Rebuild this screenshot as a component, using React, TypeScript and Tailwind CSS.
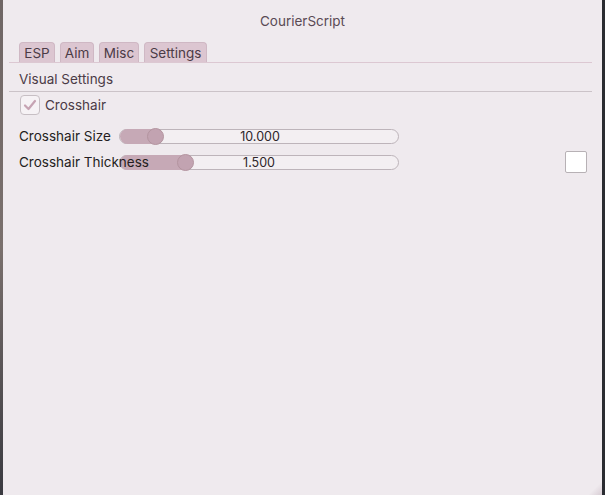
import React from "react";

function Slider({ value, pct, center }: { value: string; pct: number; center: number }) {
  return (
    <div className="relative h-[15px] w-[280px] rounded-full border border-[#bdb4ba] bg-[#f3eff2]">
      <div
        className="absolute left-0 top-[-1px] h-[15px] rounded-l-full bg-[#c6a9b6]"
        style={{ width: `${pct}px` }}
      />
      <div
        className="absolute top-[-2px] h-[17px] w-[17px] rounded-full border border-[#b3949f] bg-[#c2a3b1]"
        style={{ left: `${pct - 9}px` }}
      />
      <div
        className="absolute top-[-1px] h-[15px] text-[12.5px] leading-[15px] text-[#2d2529]"
        style={{ left: `${center}px`, transform: "translateX(-50%)" }}
      >
        {value}
      </div>
    </div>
  );
}

export default function App() {
  const tabs = [
    { t: "ESP", w: 36 },
    { t: "Aim", w: 34 },
    { t: "Misc", w: 40 },
    { t: "Settings", w: 63 },
  ];
  return (
    <div
      className="flex h-[495px] w-[605px] bg-[#2a2c31]"
      style={{ fontFamily: "Inter, 'Noto Sans', sans-serif" }}
    >
      <div className="h-full w-[3px] bg-gradient-to-b from-[#6f6665] via-[#7a706d] to-[#3a3a40]" />
      <div className="relative flex h-full w-[599px] flex-col bg-[#efeaee]">
        <div className="pt-[12px] text-center text-[13.5px] leading-[18px] text-[#5a4a55]">
          CourierScript
        </div>
        <div className="mt-[12px] flex items-end gap-[5px] pl-[16px]">
          {tabs.map((t) => (
            <div
              key={t.t}
              className="h-[20px] rounded-t-[4px] border border-b-0 border-[#cfb8c4] bg-[#dcc6d1] text-center text-[13.5px] leading-[20px] text-[#4b3b46]"
              style={{ width: `${t.w}px` }}
            >
              {t.t}
            </div>
          ))}
        </div>
        <div className="ml-[6px] mr-[10px] h-[1px] bg-[#dcc8d2]" />
        <div className="pl-[16px] pt-[7px] text-[13.5px] leading-[18px] text-[#4b3b46]">Visual Settings</div>
        <div className="ml-[6px] mr-[10px] mt-[3px] h-[1px] bg-[#cbc3c8]" />
        <div className="mt-[3px] flex items-center pl-[17px]">
          <div className="flex h-[20px] w-[20px] items-center justify-center rounded-[4px] border border-[#c7bfc4] bg-[#f6f2f5]">
            <svg width="14" height="12" viewBox="0 0 14 12">
              <path d="M2 6.5 L5.5 10 L12 2" fill="none" stroke="#c6a3b3" strokeWidth="2.2" strokeLinecap="round" strokeLinejoin="round" />
            </svg>
          </div>
          <span className="ml-[5px] text-[13.5px] leading-[20px] text-[#4b3b46]">Crosshair</span>
        </div>
        <div className="mt-[13px] flex items-center pl-[16px]">
          <div className="relative z-10 w-[100px] shrink-0 whitespace-nowrap text-[13.5px] leading-[16px] text-[#241d21]">
            Crosshair Size
          </div>
          <Slider value="10.000" pct={36} center={140} />
        </div>
        <div className="mt-[7px] flex items-center pl-[16px]">
          <div className="w-[100px] shrink-0">
            <div className="relative z-10 whitespace-nowrap text-[13.5px] leading-[16px] text-[#241d21]">
              Crosshair Thickness
            </div>
          </div>
          <Slider value="1.500" pct={66} center={139} />
          <div className="ml-[166px] h-[22px] w-[22px] rounded-[2px] border border-[#b7b1b5] bg-white" />
        </div>
        <div className="absolute bottom-0 right-0 h-[14px] w-[14px] bg-gradient-to-br from-transparent via-transparent to-[#d8cdd4]" />
      </div>
      <div className="h-full w-[3px] bg-[#2a2c31]" />
    </div>
  );
}
